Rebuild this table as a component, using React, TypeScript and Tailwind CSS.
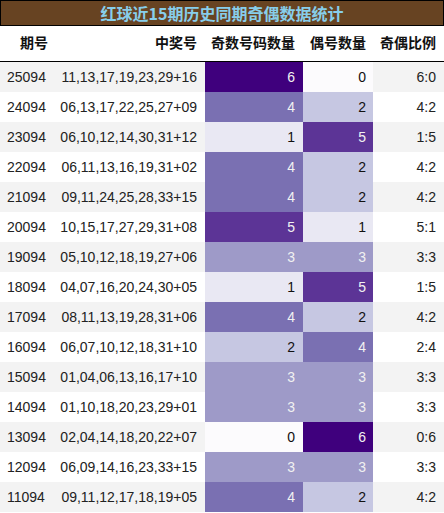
const rows: [string, string, number, number][] = [
  ["25094", "11,13,17,19,23,29+16", 6, 0],
  ["24094", "06,13,17,22,25,27+09", 4, 2],
  ["23094", "06,10,12,14,30,31+12", 1, 5],
  ["22094", "06,11,13,16,19,31+02", 4, 2],
  ["21094", "09,11,24,25,28,33+15", 4, 2],
  ["20094", "10,15,17,27,29,31+08", 5, 1],
  ["19094", "05,10,12,18,19,27+06", 3, 3],
  ["18094", "04,07,16,20,24,30+05", 1, 5],
  ["17094", "08,11,13,19,28,31+06", 4, 2],
  ["16094", "06,07,10,12,18,31+10", 2, 4],
  ["15094", "01,04,06,13,16,17+10", 3, 3],
  ["14094", "01,10,18,20,23,29+01", 3, 3],
  ["13094", "02,04,14,18,20,22+07", 0, 6],
  ["12094", "06,09,14,16,23,33+15", 3, 3],
  ["11094", "09,11,12,17,18,19+05", 4, 2],
];

// Purples scale, 0..6
const shade: Record<number, string> = {
  0: "bg-[#fcfbfd] text-[#111]",
  1: "bg-[#e9e8f3] text-[#111]",
  2: "bg-[#c6c7e2] text-[#111]",
  3: "bg-[#9e9ac8] text-[#f1f1f1]",
  4: "bg-[#7a70b2] text-[#f1f1f1]",
  5: "bg-[#5c3496] text-[#f1f1f1]",
  6: "bg-[#3f007d] text-[#f1f1f1]",
};

const cols = "grid grid-cols-[55px_150px_98px_70px_71px]";

const App = () => {
  return (
    <div className="w-[444px] bg-white" style={{ fontFamily: '"Liberation Sans", "Noto Sans CJK SC", sans-serif' }}>
      {/* title */}
      <div
        className="h-[26px] border border-black bg-[#674322] text-[#87ceeb] text-[16px] font-semibold flex items-center justify-center leading-none"
        style={{ fontFamily: '"Noto Sans CJK SC", sans-serif' }}
      >
        红球近15期历史同期奇偶数据统计
      </div>

      {/* header */}
      <div className={`${cols} h-[36px] border-b border-black text-[14px] font-bold text-[#111] items-center`}>
        <div className="pl-[20px]">期号</div>
        <div className="text-right pr-[8px]">中奖号</div>
        <div className="text-right pr-[8px]">奇数号码数量</div>
        <div className="text-right pr-[7px]">偶号数量</div>
        <div className="text-right pr-[8px]">奇偶比例</div>
      </div>

      {rows.map(([issue, nums, odd, even], i) => (
        <div
          key={issue}
          className={`${cols} h-[30px] text-[14px] text-[#222] ${i % 2 === 0 ? "bg-[#f3f3f3]" : "bg-white"}`}
        >
          <div className="flex items-center pl-[7px]">{issue}</div>
          <div className="flex items-center justify-end pr-[8px]">{nums}</div>
          <div className={`flex items-center justify-end pr-[8px] ${shade[odd]}`}>{odd}</div>
          <div className={`flex items-center justify-end pr-[7px] ${shade[even]}`}>{even}</div>
          <div className="flex items-center justify-end pr-[8px]">
            {odd}:{even}
          </div>
        </div>
      ))}
    </div>
  );
};

export default App;
